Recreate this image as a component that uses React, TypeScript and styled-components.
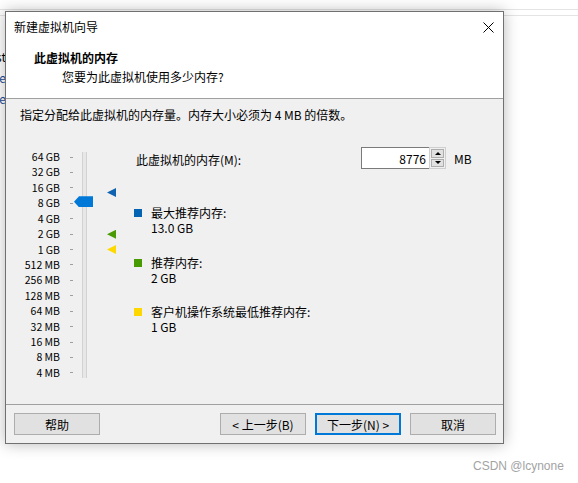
import styled, { createGlobalStyle } from 'styled-components'

const GlobalStyle = createGlobalStyle`
  html, body {
    margin: 0;
    padding: 0;
    background: #fff;
  }
  body {
    font-family: "Noto Sans CJK SC", "Noto Sans", sans-serif;
    font-size: 12px;
    color: #000;
  }
`

const ROW = 15.43

const Desktop = styled.div`
  position: relative;
  width: 578px;
  height: 483px;
  overflow: hidden;
  background: #fff;
`

const BackStrip = styled.div`
  position: absolute;
  left: 0;
  right: 0;
  top: 9px;
  height: 5px;
  border-top: 1px solid #e4e4e4;
  border-bottom: 1px solid #e4e4e4;
`

const BackText = styled.div`
  position: absolute;
  left: 0;
  top: 46px;
  width: 6px;
  overflow: hidden;
  display: flex;
  flex-direction: column;
  align-items: flex-end;
  line-height: 21px;
`

const BackLine = styled.span<{ $link?: boolean }>`
  white-space: nowrap;
  color: ${p => (p.$link ? '#1b4f9c' : '#000')};
`

const Dialog = styled.div`
  position: absolute;
  left: 5px;
  top: 11px;
  width: 499px;
  height: 433px;
  box-sizing: border-box;
  border: 1px solid #707070;
  box-shadow: 0 0 14px rgba(0, 0, 0, 0.28);
  background: #f0f0f0;
  display: flex;
  flex-direction: column;
`

const Header = styled.div`
  height: 87px;
  box-sizing: border-box;
  background: #fff;
  border-bottom: 1px solid #a0a0a0;
`

const TitleBar = styled.div`
  height: 30px;
  display: flex;
  align-items: center;
  justify-content: space-between;
  padding: 0 9px 0 8px;
  line-height: 16px;
`

const HeaderTitle = styled.div`
  margin-top: 8px;
  padding-left: 28px;
  font-weight: bold;
  line-height: 16px;
`

const HeaderSub = styled.div`
  margin-top: 3px;
  padding-left: 56px;
  line-height: 16px;
`

const Body = styled.div`
  flex: 1;
  padding: 8px 0 0 14px;
`

const Instruction = styled.div`
  line-height: 16px;
`

const Main = styled.div`
  display: flex;
  margin-top: 24px;
`

const Slider = styled.div`
  position: relative;
  width: 114px;
  height: 240px;
  display: flex;
  align-items: flex-start;
`

const LabelsCol = styled.div`
  padding-top: 2.3px;
  display: flex;
  flex-direction: column;
`

const LabelRow = styled.div`
  height: ${ROW}px;
  display: flex;
  align-items: center;
`

const Label = styled.span`
  width: 40px;
  text-align: right;
  white-space: nowrap;
  font-size: 10.5px;
  line-height: 14px;
`

const Tick = styled.span`
  width: 3px;
  height: 1px;
  margin-left: 10px;
  background: #a0a0a0;
`

const Track = styled.div`
  margin: 5px 0 0 9px;
  width: 5px;
  height: 226px;
  box-sizing: border-box;
  background: #e7e7e7;
  border-left: 1px solid #d2d2d2;
  border-right: 1px solid #d2d2d2;
`

const Thumb = styled.div`
  position: absolute;
  left: 54px;
  width: 19px;
  height: 11px;
  background: #0078d7;
  clip-path: polygon(0 50%, 5px 0, 100% 0, 100% 100%, 5px 100%);
`

const Marker = styled.div<{ $color: string }>`
  position: absolute;
  left: 87px;
  width: 9px;
  height: 9px;
  background: ${p => p.$color};
  clip-path: polygon(0 50%, 100% 0, 100% 100%);
`

const Panel = styled.div`
  flex: 1;
  display: flex;
  flex-direction: column;
`

const MemoryRow = styled.div`
  display: flex;
  align-items: center;
  height: 22px;
`

const MemoryLabel = styled.span`
  width: 225px;
  padding-left: 2px;
  padding-top: 2px;
`

const Input = styled.div`
  width: 69px;
  height: 22px;
  box-sizing: border-box;
  border: 1px solid #7a7a7a;
  background: #fff;
  display: flex;
  align-items: center;
  justify-content: flex-end;
  padding-right: 3px;
`

const Spinner = styled.div`
  width: 17px;
  height: 22px;
  box-sizing: border-box;
  margin-left: -1px;
  border: 1px solid #cfcfcf;
  background: #f0f0f0;
  padding: 1px;
  display: flex;
  flex-direction: column;
  gap: 1px;
`

const SpinButton = styled.div<{ $down?: boolean }>`
  flex: 1;
  border: 1px solid #adadad;
  background: #e1e1e1;
  display: flex;
  align-items: center;
  justify-content: center;

  &::after {
    content: '';
    border-left: 3px solid transparent;
    border-right: 3px solid transparent;
    ${p => (p.$down ? 'border-top: 3px solid #000;' : 'border-bottom: 3px solid #000;')}
  }
`

const Unit = styled.span`
  margin-left: 8px;
`

const Legend = styled.div`
  margin-top: 36px;
  display: flex;
  flex-direction: column;
  gap: 19.5px;
`

const LegendItem = styled.div`
  display: flex;
  align-items: flex-start;
  gap: 9px;
`

const Swatch = styled.span<{ $color: string }>`
  width: 8px;
  height: 8px;
  margin-top: 4px;
  background: ${p => p.$color};
`

const LegendText = styled.div`
  line-height: 15px;
`

const Footer = styled.div`
  height: 39px;
  box-sizing: border-box;
  border-top: 1px solid #a0a0a0;
  padding: 8px 7px 0 8px;
  display: flex;
  align-items: flex-start;
`

const Button = styled.button<{ $primary?: boolean; $gap?: boolean }>`
  width: 86px;
  height: 22px;
  box-sizing: border-box;
  margin: 0 0 0 ${p => (p.$gap ? '9px' : '0')};
  padding: 0;
  font: inherit;
  color: #000;
  background: #e1e1e1;
  border: 1px solid ${p => (p.$primary ? '#0078d7' : '#adadad')};
  box-shadow: ${p => (p.$primary ? 'inset 0 0 0 1px #0078d7' : 'none')};
`

const Spacer = styled.div`
  flex: 1;
`

const Watermark = styled.div`
  position: absolute;
  left: 473px;
  top: 459px;
  font-family: "Liberation Sans", "Noto Sans CJK SC", sans-serif;
  font-size: 12px;
  color: #a3a3a3;
`

const labels = [
  '64 GB', '32 GB', '16 GB', '8 GB', '4 GB', '2 GB', '1 GB',
  '512 MB', '256 MB', '128 MB', '64 MB', '32 MB', '16 MB', '8 MB', '4 MB',
]

// y of a value on the slider, relative to the slider's top
const posOf = (mb: number) => 10 + (16 - Math.log2(mb)) * ROW

const markers = [
  { mb: 13312, color: '#0f63b0' },
  { mb: 2048, color: '#4a9a06' },
  { mb: 1024, color: '#ffd800' },
]

const legend = [
  { color: '#0463b2', name: '最大推荐内存:', value: '13.0 GB' },
  { color: '#479b00', name: '推荐内存:', value: '2 GB' },
  { color: '#ffd700', name: '客户机操作系统最低推荐内存:', value: '1 GB' },
]

const CloseIcon = () => (
  <svg width="11" height="11" viewBox="0 0 11 11">
    <path d="M0.5 0.5 L10.5 10.5 M10.5 0.5 L0.5 10.5" stroke="#000" strokeWidth="1" fill="none" />
  </svg>
)

export default function App() {
  const memory = 8776
  return (
    <Desktop>
      <GlobalStyle />
      <BackStrip />
      <BackText>
        <BackLine>st</BackLine>
        <BackLine $link>le</BackLine>
        <BackLine $link>le</BackLine>
      </BackText>

      <Dialog>
        <Header>
          <TitleBar>
            <span>新建虚拟机向导</span>
            <CloseIcon />
          </TitleBar>
          <HeaderTitle>此虚拟机的内存</HeaderTitle>
          <HeaderSub>您要为此虚拟机使用多少内存?</HeaderSub>
        </Header>

        <Body>
          <Instruction>指定分配给此虚拟机的内存量。内存大小必须为 4 MB 的倍数。</Instruction>
          <Main>
            <Slider>
              <LabelsCol>
                {labels.map(l => (
                  <LabelRow key={l}>
                    <Label>{l}</Label>
                    <Tick />
                  </LabelRow>
                ))}
              </LabelsCol>
              <Track />
              <Thumb style={{ top: posOf(memory) - 5.5 }} />
              {markers.map(m => (
                <Marker key={m.mb} $color={m.color} style={{ top: posOf(m.mb) - 4.5 }} />
              ))}
            </Slider>

            <Panel>
              <MemoryRow>
                <MemoryLabel>此虚拟机的内存(M):</MemoryLabel>
                <Input>{memory}</Input>
                <Spinner>
                  <SpinButton />
                  <SpinButton $down />
                </Spinner>
                <Unit>MB</Unit>
              </MemoryRow>
              <Legend>
                {legend.map(item => (
                  <LegendItem key={item.name}>
                    <Swatch $color={item.color} />
                    <LegendText>
                      <div>{item.name}</div>
                      <div>{item.value}</div>
                    </LegendText>
                  </LegendItem>
                ))}
              </Legend>
            </Panel>
          </Main>
        </Body>

        <Footer>
          <Button>帮助</Button>
          <Spacer />
          <Button>&lt; 上一步(B)</Button>
          <Button $primary $gap>下一步(N) &gt;</Button>
          <Button $gap>取消</Button>
        </Footer>
      </Dialog>

      <Watermark>CSDN @lcynone</Watermark>
    </Desktop>
  )
}
